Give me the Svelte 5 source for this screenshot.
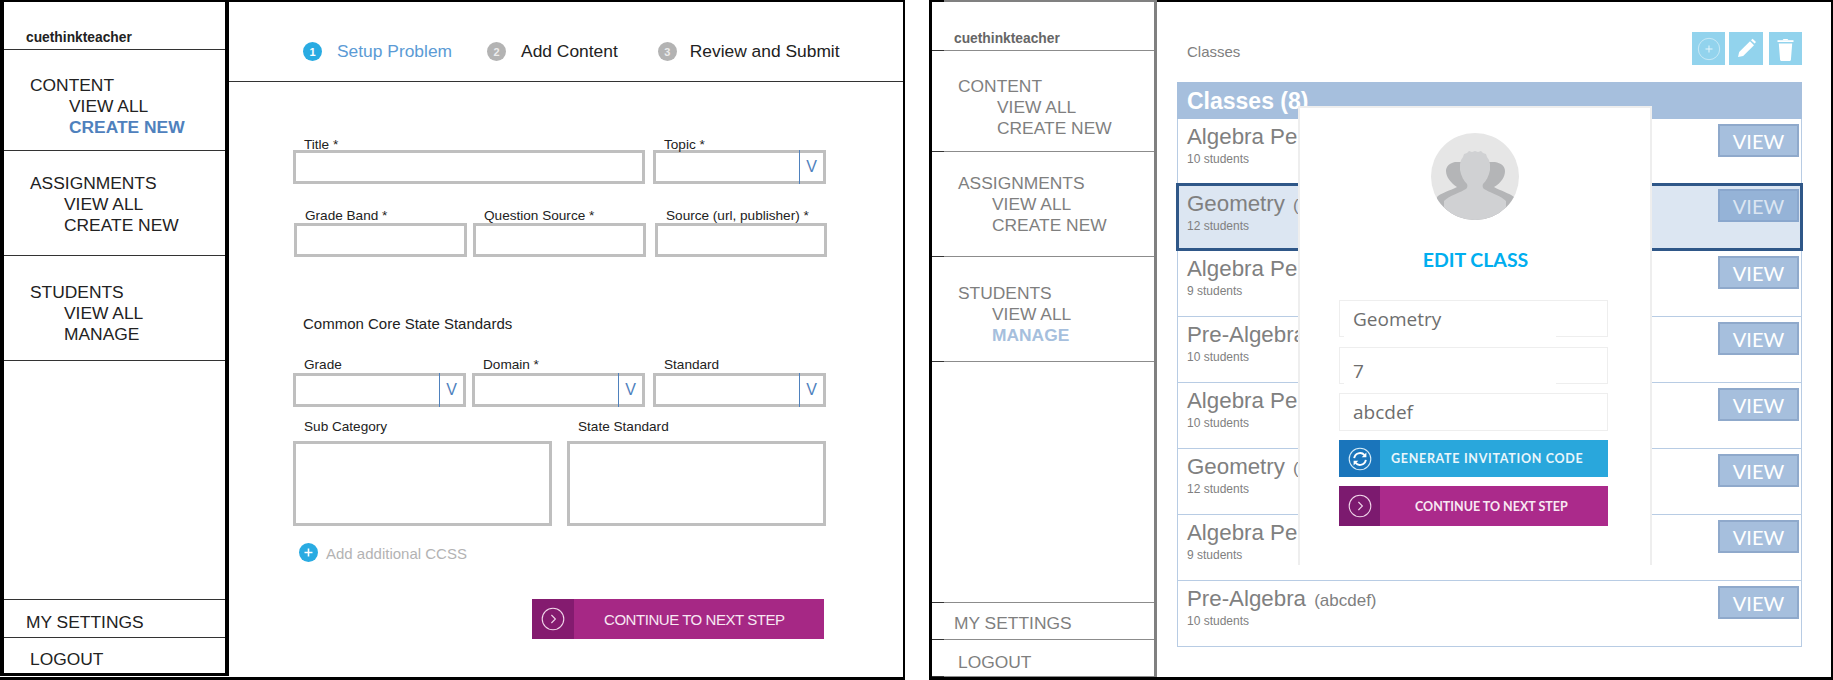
<script>
  const nav = [
    { key: "content", title: "CONTENT", links: ["VIEW ALL", "CREATE NEW"] },
    { key: "assignments", title: "ASSIGNMENTS", links: ["VIEW ALL", "CREATE NEW"] },
    { key: "students", title: "STUDENTS", links: ["VIEW ALL", "MANAGE"] }
  ];

  const classes = [
    { name: "Algebra Period 1", count: "10 students" },
    { name: "Geometry", count: "12 students", selected: true },
    { name: "Algebra Period 2", count: "9 students" },
    { name: "Pre-Algebra", count: "10 students" },
    { name: "Algebra Period 3", count: "10 students" },
    { name: "Geometry", count: "12 students" },
    { name: "Algebra Period 4", count: "9 students" },
    { name: "Pre-Algebra", count: "10 students" }
  ];
</script>

{#snippet sidebar(variant, activeSection, activeLink)}
  <aside class="sidebar {variant}">
    <div class="brand rule">cuethinkteacher</div>
    {#each nav as section}
      <div class="nav rule {section.key}">
        <div class="nav-title">{section.title}</div>
        <div class="nav-links">
          {#each section.links as link}
            <div class:active={section.key === activeSection && link === activeLink}>{link}</div>
          {/each}
        </div>
      </div>
    {/each}
    <div class="spacer rule"></div>
    <div class="settings rule">MY SETTINGS</div>
    <div class="logout rule">LOGOUT</div>
  </aside>
{/snippet}

{#snippet field(label, cls, select)}
  <div class="field {cls}">
    <div class="label">{label}</div>
    <div class="box">
      {#if select}<span class="caret">V</span>{/if}
    </div>
  </div>
{/snippet}

{#snippet chevron()}
  <svg class="ring" viewBox="0 0 24 24" width="24" height="24">
    <circle cx="12" cy="12" r="10.8" fill="none" stroke="#f1d6ea" stroke-width="1.1" />
    <path d="M10.4 8l4 4-4 4" fill="none" stroke="#f1d6ea" stroke-width="1.1" />
  </svg>
{/snippet}

<div class="page">
  <section class="panel first">
    {@render sidebar("plain", "content", "CREATE NEW")}
    <main class="editor">
      <header class="steps">
        <div class="step s1 current"><span class="dot">1</span>Setup Problem</div>
        <div class="step s2"><span class="dot">2</span>Add Content</div>
        <div class="step s3"><span class="dot">3</span>Review and Submit</div>
      </header>

      <div class="form">
        <div class="frow r1">
          {@render field("Title *", "w352")}
          {@render field("Topic *", "w173", true)}
        </div>
        <div class="frow r2">
          {@render field("Grade Band *", "w173")}
          {@render field("Question Source *", "w173")}
          {@render field("Source (url, publisher) *", "w172")}
        </div>
        <h3 class="core">Common Core State Standards</h3>
        <div class="frow r3">
          {@render field("Grade", "w173", true)}
          {@render field("Domain *", "w173", true)}
          {@render field("Standard", "w173", true)}
        </div>
        <div class="frow r4">
          {@render field("Sub Category", "w259 tall")}
          {@render field("State Standard", "w259 tall")}
        </div>
        <div class="add">
          <svg viewBox="0 0 19 19" width="19" height="19">
            <circle cx="9.5" cy="9.5" r="9.5" fill="#29abe2" />
            <path d="M5.5 9.5h8M9.5 5.5v8" stroke="#fff" stroke-width="1.6" />
          </svg>
          <span>Add additional CCSS</span>
        </div>
        <button class="next">
          <span class="next-icon">{@render chevron()}</span>
          <span class="next-text">CONTINUE TO NEXT STEP</span>
        </button>
      </div>
    </main>
  </section>

  <section class="panel second">
    {@render sidebar("dim", "students", "MANAGE")}
    <main class="listing">
      <header class="toolbar">
        <span class="crumb">Classes</span>
        <button class="tool" aria-label="Add">
          <svg viewBox="0 0 33 33" width="33" height="33">
            <circle cx="17" cy="17" r="10.7" fill="none" stroke="#c8e9f6" stroke-width="1" />
            <path d="M13.5 17h7M17 13.5v7" stroke="#e6f6fc" stroke-width="1" />
          </svg>
        </button>
        <button class="tool pencil" aria-label="Edit">
          <svg viewBox="0 0 34 33" width="34" height="33">
            <path d="M9 25l1.2-5L21 9.3l4 4L14.2 24z" fill="#fff" />
            <path d="M22 8.2L23.6 6.7 27 10 25.6 11.6z" fill="#fff" />
          </svg>
        </button>
        <button class="tool trash" aria-label="Delete">
          <svg viewBox="0 0 33 33" width="33" height="33">
            <path d="M8.5 8.2h16v1.8h-16z" fill="#fff" />
            <path d="M13.5 8.2l1-1.3h4l1 1.3z" fill="#fff" />
            <path d="M9.8 11.5h13.4l-1.3 16.6a1 1 0 0 1-1 .8h-8.8a1 1 0 0 1-1-.8z" fill="#fff" />
          </svg>
        </button>
      </header>

      <div class="classes">
        <div class="classes-head">Classes (8)</div>
        {#each classes as c}
          <div class="row" class:selected={c.selected}>
            <div>
              <div class="cname">{c.name} <small>(abcdef)</small></div>
              <div class="count">{c.count}</div>
            </div>
            <button class="view">VIEW</button>
          </div>
        {/each}
      </div>

      <div class="modal">
        <svg class="avatar" viewBox="0 0 88 87" width="88" height="87">
          <defs>
            <clipPath id="face"><ellipse cx="44" cy="43.5" rx="44" ry="43.5" /></clipPath>
          </defs>
          <ellipse cx="44" cy="43.5" rx="44" ry="43.5" fill="#e6e6e6" />
          <g clip-path="url(#face)">
            <path d="M6 64c4-4 12-6 20-10-6-4-11-10-11-16 0-5 4-8 9-9h40c6 1 10 4 10 9 0 6-4 12-11 16 7 4 15 6 20 10v23H6z" fill="#b4b5b7" />
            <path d="M44 18l3 1 3-1 2 2 3 1 1 3 2 3 1 4v6c-1 6-4 11-7 14-1 3 0 5 3 6 5 3 15 6 20 11v20H13V68c5-5 15-8 20-11 3-1 4-3 3-6-3-3-6-8-7-14v-6l1-4 2-3 1-3 3-1 2-2 3 1z" fill="#d0d1d3" />
          </g>
        </svg>
        <h2>EDIT CLASS</h2>
        <div class="inp i1 cut">Geometry</div>
        <div class="inp i2 cut"><span>7</span></div>
        <div class="inp i3">abcdef</div>
        <button class="action gen">
          <span class="action-icon">
            <svg viewBox="0 0 24 24" width="24" height="24">
              <circle cx="12" cy="12" r="10.8" fill="none" stroke="#d6ecf8" stroke-width="1.1" />
              <path d="M6.2 11.2a5.9 5.9 0 0 1 10.3-3.1" fill="none" stroke="#fff" stroke-width="1.9" />
              <path d="M18.4 5.6v4.7h-4.7z" fill="#fff" />
              <path d="M17.8 12.8a5.9 5.9 0 0 1-10.3 3.1" fill="none" stroke="#fff" stroke-width="1.9" />
              <path d="M5.6 18.4v-4.7h4.7z" fill="#fff" />
            </svg>
          </span>
          <span class="action-text">GENERATE INVITATION CODE</span>
        </button>
        <button class="action cont">
          <span class="action-icon">{@render chevron()}</span>
          <span class="action-text">CONTINUE TO NEXT STEP</span>
        </button>
      </div>
    </main>
  </section>
</div>

<style>
  :global(body) {
    margin: 0;
    background: #fff;
  }

  .page {
    display: flex;
    width: 1833px;
    height: 680px;
    gap: 24px;
    font-family: "Liberation Sans", Arial, sans-serif;
    overflow: hidden;
  }

  button {
    font-family: inherit;
    padding: 0;
    cursor: pointer;
  }

  .panel {
    display: flex;
    box-sizing: border-box;
    height: 680px;
  }

  .first {
    width: 905px;
    border-right: 2px solid #000;
    border-bottom: 3px solid #000;
  }

  .second {
    position: relative;
    width: 904px;
    border-left: 3px solid #000;
    border-right: 2px solid #000;
    border-bottom: 3px solid #000;
  }

  /* sidebar */
  .sidebar {
    display: flex;
    flex-direction: column;
    box-sizing: border-box;
    font-size: 17.4px;
    line-height: 21px;
  }

  .plain {
    height: 676px;
    border-left: 4px solid #000;
    border-right: 4px solid #000;
    border-top: 2px solid #000;
    border-bottom: 3px solid #000;
    width: 229px;
    color: #222;
    --rule: #333;
  }

  .dim {
    height: 677px;
    padding-top: 2px;
    width: 225px;
    border-right: 3px solid #808080;
    color: #7f7f7f;
    --rule: #8c8c8c;
    background: linear-gradient(90deg, #000 12px, #808080 12px) top / 100% 2px no-repeat;
  }

  .rule {
    box-sizing: border-box;
    background: linear-gradient(var(--rule), var(--rule)) bottom / 100% 1px no-repeat;
  }

  .dim .rule {
    background-image: linear-gradient(90deg, #333 12px, var(--rule) 12px);
  }

  .brand {
    height: 48px;
    padding: 28px 0 0 22px;
    font-size: 13.8px;
    font-weight: bold;
    line-height: 16px;
  }

  .dim .brand {
    height: 49px;
    padding-top: 29px;
    color: #666;
  }

  .nav {
    padding-left: 26px;
    height: 101px;
  }

  .assignments,
  .students {
    height: 105px;
  }

  .content {
    padding-top: 25px;
  }

  .assignments {
    padding-top: 22px;
  }

  .dim .assignments {
    padding-top: 21px;
  }

  .students {
    padding-top: 26px;
  }

  .nav-links {
    padding-left: 34px;
  }

  .content .nav-links {
    padding-left: 39px;
  }

  .active {
    font-weight: bold;
    color: #4f81bd;
  }

  .dim .active {
    color: #a6bfdd;
  }

  .spacer {
    flex: 1;
  }

  .settings {
    height: 38px;
    padding: 12px 0 0 22px;
  }

  .logout {
    height: 35px;
    padding: 11px 0 0 26px;
  }

  .plain .logout {
    background: none;
  }

  .dim .settings {
    height: 37px;
    padding-top: 10px;
  }

  .dim .logout {
    height: 37px;
    padding-top: 12px;
  }

  /* step form */
  .editor {
    flex: 1;
    border-top: 2px solid #000;
  }

  .steps {
    display: flex;
    align-items: center;
    box-sizing: border-box;
    height: 80px;
    padding: 20px 0 0 74px;
    border-bottom: 1px solid #333;
    font-size: 17.4px;
    color: #222;
  }

  .step {
    display: flex;
    align-items: center;
    gap: 15px;
  }

  .s2 {
    margin-left: 35px;
  }

  .s3 {
    margin-left: 40px;
    gap: 13px;
  }

  .current {
    color: #5b9bd5;
  }

  .dot {
    display: flex;
    align-items: center;
    justify-content: center;
    width: 19px;
    height: 19px;
    border-radius: 50%;
    background: #b3b3b3;
    color: #ececec;
    font-size: 11px;
    font-weight: bold;
  }

  .current .dot {
    background: #29abe2;
    color: #fff;
  }

  .form {
    padding: 0 0 0 64px;
    color: #222;
  }

  .frow {
    display: flex;
  }

  .r1 {
    margin-top: 56px;
    gap: 8px;
  }

  .r2 {
    margin: 25px 0 0 1px;
    gap: 6px;
  }

  .r2 .box {
    margin-top: 0;
  }

  .r2 .field:last-child {
    margin-left: 3px;
  }

  .r3 {
    margin-top: 25px;
    gap: 6px;
  }

  .r3 .field:last-child {
    margin-left: 2px;
  }

  .r4 {
    margin-top: 13px;
    gap: 15px;
  }

  .w352 {
    width: 352px;
  }

  .w173 {
    width: 173px;
  }

  .w172 {
    width: 172px;
  }

  .w259 {
    width: 259px;
  }

  .label {
    height: 14px;
    padding-left: 11px;
    font-size: 13.6px;
    line-height: 14px;
    white-space: nowrap;
  }

  .box {
    display: flex;
    justify-content: flex-end;
    box-sizing: border-box;
    height: 34px;
    margin-top: 1px;
    border: 3px solid #bfbfbf;
  }

  .tall .box {
    height: 85px;
    margin-top: 7px;
  }

  .r1 .box {
    margin-top: -2px;
  }

  .caret {
    display: flex;
    align-items: center;
    justify-content: center;
    width: 23px;
    margin: -3px 0;
    border-left: 1px solid #4f81bd;
    color: #4f81bd;
    font-size: 16px;
  }

  .core {
    margin: 58px 0 0 10px;
    font-size: 15px;
    font-weight: normal;
    line-height: 18px;
  }

  .add {
    display: flex;
    align-items: center;
    gap: 8px;
    height: 19px;
    margin: 17px 0 0 6px;
    font-size: 15px;
    color: #b3b3b3;
  }

  .add span {
    margin-top: 2px;
  }

  .next {
    display: flex;
    align-items: stretch;
    width: 292px;
    height: 40px;
    margin: 37px 0 0 239px;
    border: none;
    background: #a62885;
    color: #f8e8f3;
  }

  .next-icon {
    display: flex;
    align-items: center;
    justify-content: center;
    width: 42px;
    background: #841b6f;
  }

  .next-text {
    align-self: center;
    margin-left: 30px;
    font-size: 15px;
    letter-spacing: -0.45px;
  }

  /* class list */
  .listing {
    flex: 1;
    border-top: 2px solid #000;
    padding: 0 29px 0 20px;
  }

  .toolbar {
    display: flex;
    align-items: center;
    height: 33px;
    margin-top: 30px;
  }

  .crumb {
    margin: 0 auto 0 10px;
    font-size: 15px;
    color: #808080;
    position: relative;
    top: 3px;
  }

  .tool {
    display: block;
    width: 33px;
    height: 33px;
    border: none;
    background: #92d3ed;
  }

  .tool svg {
    display: block;
  }

  .pencil {
    width: 34px;
    margin-left: 4px;
  }

  .trash {
    margin-left: 6px;
  }

  .classes {
    margin-top: 17px;
  }

  .classes-head {
    box-sizing: border-box;
    height: 37px;
    padding: 5px 0 0 10px;
    background: #a6bfdd;
    color: #fff;
    font-size: 23px;
    font-weight: bold;
    line-height: 28px;
  }

  .row {
    display: flex;
    justify-content: space-between;
    align-items: flex-start;
    box-sizing: border-box;
    height: 66px;
    padding: 6px 2px 0 9px;
    border: solid #b8cce4;
    border-width: 0 1px 1px;
    color: #808080;
  }

  .row.selected {
    position: relative;
    height: 68px;
    margin: -2px -1px 0;
    padding: 6px 1px 0 8px;
    border: 3px solid #2f5788;
    background: #dce6f2;
  }

  .cname {
    font-size: 22.3px;
    line-height: 24px;
    white-space: nowrap;
  }

  .cname small {
    font-size: 17px;
    margin-left: 2px;
  }

  .count {
    font-size: 12px;
    line-height: 16px;
  }

  .view {
    width: 81px;
    height: 33px;
    margin-top: -1px;
    border: 2px solid #8fa9cb;
    background: #a6bfdd;
    color: #fff;
    font-family: Lato, sans-serif;
    font-size: 20px;
    line-height: 28px;
  }

  .selected .view {
    margin-top: -3px;
    border-color: #8aa7cd;
    background: #95b3d7;
    color: #dce6f2;
  }

  /* modal over the list */
  .modal {
    position: absolute;
    left: 366px;
    top: 106px;
    box-sizing: border-box;
    width: 354px;
    height: 459px;
    padding: 25px 0 0 39px;
    border: solid #eee;
    border-width: 2px 2px 0;
    background: #fff;
    color: #6e6e6e;
    font-family: "Open Sans", sans-serif;
  }

  .avatar {
    display: block;
    margin-left: 92px;
  }

  .modal h2 {
    width: 273px;
    margin: 30px 0;
    font-family: Lato, sans-serif;
    font-size: 19.5px;
    font-weight: bold;
    line-height: 20px;
    text-align: center;
    color: #00aeef;
  }

  .inp {
    position: relative;
    box-sizing: border-box;
    width: 269px;
    height: 37px;
    padding: 5px 0 0 13px;
    border: 1px solid #eee;
    font-size: 19px;
    line-height: 26px;
  }

  .cut::after {
    content: "";
    position: absolute;
    left: 4px;
    bottom: -1px;
    width: 212px;
    height: 1px;
    background: #fff;
  }

  .i2 {
    margin-top: 10px;
    padding-top: 10px;
  }

  .i3 {
    height: 38px;
    margin-top: 9px;
  }

  .action {
    display: flex;
    align-items: stretch;
    width: 269px;
    height: 37px;
    border: none;
    color: #eaf6fb;
    font-family: Lato, sans-serif;
  }

  .action-icon {
    display: flex;
    align-items: center;
    justify-content: center;
    width: 41px;
  }

  .action-text {
    align-self: center;
    font-weight: bold;
  }

  .gen {
    margin-top: 9px;
    background: #29a7dc;
  }

  .gen .action-icon {
    background: #1a75bb;
  }

  .gen .action-text {
    margin-left: 11px;
    font-size: 12.5px;
    letter-spacing: 0.7px;
  }

  .cont {
    height: 40px;
    margin-top: 9px;
    background: #ab2a8b;
    color: #f8e8f3;
  }

  .cont .action-icon {
    background: #7c1a6f;
  }

  .cont .action-text {
    margin-left: 35px;
    font-size: 12.5px;
  }
</style>
